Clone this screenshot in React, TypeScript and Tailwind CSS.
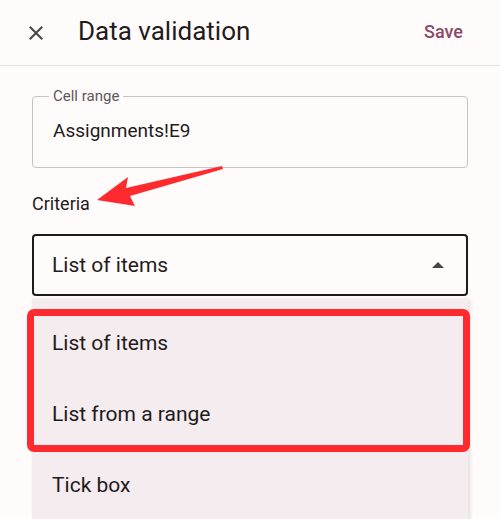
import React from 'react';

const options = ['List of items', 'List from a range', 'Tick box'];

const CloseIcon = () => (
    <svg width="24" height="24" viewBox="0 0 24 24" className="shrink-0">
        <path
            d="M19 6.41L17.59 5 12 10.59 6.41 5 5 6.41 10.59 12 5 17.59 6.41 19 12 13.41 17.59 19 19 17.59 13.41 12z"
            fill="#4a4446"
        />
    </svg>
);

const App: React.FC = () => {
    return (
        <div
            className="relative w-[500px] h-[519px] overflow-hidden bg-[#fffbfb] text-[#1f1b1d]"
            style={{ fontFamily: 'Roboto, "Noto Sans", sans-serif' }}
        >
            {/* header */}
            <div className="flex items-center h-[66px] border-b border-[#e6dcdf] pl-6 pr-[37px]">
                <CloseIcon />
                <h1 className="ml-[30px] -mt-[3px] text-[26px] leading-none text-[#1f1b1d]">Data validation</h1>
                <button className="ml-auto -mt-[3px] text-[18px] font-medium text-[#8c4a68]">Save</button>
            </div>

            {/* cell range */}
            <fieldset className="mx-8 mt-[21px] h-[81px] border border-[#cbc1c4] rounded-[4px] px-5">
                <legend className="px-1 -ml-1 text-[15px] leading-[18px] text-[#5f5759]">Cell range</legend>
                <div className="text-[19px] leading-none mt-[16px]">Assignments!E9</div>
            </fieldset>

            <div className="mx-8 mt-[27px] text-[18px] leading-none">Criteria</div>

            {/* select */}
            <div className="mx-8 mt-[21px] h-[62px] border-2 border-[#1d1b1c] rounded-[4px] flex items-center pl-[18px] pr-[22px]">
                <span className="text-[21px] leading-none">List of items</span>
                <svg width="12" height="6" viewBox="0 0 12 6" className="ml-auto">
                    <path d="M0 6L6 0 12 6z" fill="#4a4446" />
                </svg>
            </div>

            {/* menu */}
            <div className="mx-8 mt-[2px] pt-[10px] h-[240px] bg-[#f4ecee] shadow-[2px_2px_4px_rgba(0,0,0,0.12)]">
                {options.map(o => (
                    <div key={o} className="h-[71px] flex items-center px-5 text-[21px] leading-none">
                        {o}
                    </div>
                ))}
            </div>

            {/* annotation: red highlight box */}
            <div className="absolute left-[27px] top-[309px] w-[443px] h-[143px] border-[7px] border-[#ff2a2d] rounded-[7px]" />

            {/* annotation: arrow */}
            <svg className="absolute left-0 top-0" width="500" height="519" viewBox="0 0 500 519">
                <polygon
                    points="97,200 128,177 126,188 222,166 223,169 130,196 135,206"
                    fill="#ff2a2d"
                />
            </svg>
        </div>
    );
};

export default App;
